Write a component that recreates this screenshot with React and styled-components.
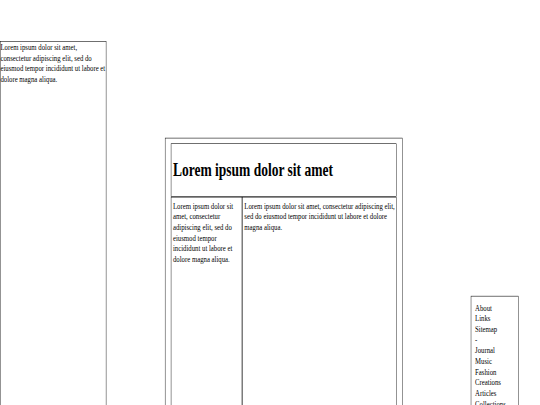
import React from "react";
import styled, { createGlobalStyle } from "styled-components";

const GlobalStyle = createGlobalStyle`
  html, body {
    margin: 0;
    padding: 0;
    overflow: hidden;
    background: #fff;
  }
  body {
    font-family: "Liberation Serif", "Times New Roman", serif;
    font-size: 16px;
    color: #000;
  }
`;

/* The page is laid out at 1280x720 and shown squeezed into the 540x405 window. */
const Stage = styled.div`
  width: 1280px;
  height: 720px;
  overflow: hidden;
  display: flex;
  align-items: flex-start;
  transform: scale(0.421875, 0.5625);
  transform-origin: 0 0;
`;

const Sidebar = styled.aside`
  box-sizing: border-box;
  flex: none;
  width: 252px;
  height: 800px;
  margin-top: 73px;
  border: 1px solid #000;
`;

const Para = styled.p`
  margin: 0;
  line-height: 19px;
`;

const Frame = styled.div`
  box-sizing: border-box;
  flex: none;
  width: 564px;
  margin-top: 245px;
  margin-left: 139px;
  padding: 9px 13px;
  border: 1px solid #000;
`;

const Header = styled.header`
  border: 1px solid #000;
  padding: 7px 4px;
`;

const Title = styled.h1`
  margin: 20px 0 21px;
  font-size: 32px;
  line-height: 38px;
  font-weight: bold;
`;

const Columns = styled.div`
  display: flex;
  align-items: stretch;
`;

const Column = styled.div`
  box-sizing: border-box;
  border: 1px solid #000;
  padding: 5px 4px;
  min-height: 500px;
  ${(p) => (p.$narrow ? "flex: none; width: 169px;" : "flex: 1;")}
`;

const Nav = styled.nav`
  box-sizing: border-box;
  flex: none;
  width: 113px;
  margin-top: 526px;
  margin-left: 161px;
  padding: 10px 9px;
  border: 1px solid #000;
`;

const NavItem = styled.div`
  line-height: 19px;
  white-space: nowrap;
`;

const lorem =
  "Lorem ipsum dolor sit amet, consectetur adipiscing elit, sed do eiusmod tempor incididunt ut labore et dolore magna aliqua.";

const navItems = [
  "About",
  "Links",
  "Sitemap",
  "-",
  "Journal",
  "Music",
  "Fashion",
  "Creations",
  "Articles",
  "Collections",
  "Contact",
];

export default function App() {
  return (
    <>
      <GlobalStyle />
      <Stage>
        <Sidebar>
          <Para>{lorem}</Para>
        </Sidebar>
        <Frame>
          <Header>
            <Title>Lorem ipsum dolor sit amet</Title>
          </Header>
          <Columns>
            <Column $narrow>
              <Para>{lorem}</Para>
            </Column>
            <Column>
              <Para>{lorem}</Para>
            </Column>
          </Columns>
        </Frame>
        <Nav>
          {navItems.map((item, i) => (
            <NavItem key={i}>{item}</NavItem>
          ))}
        </Nav>
      </Stage>
    </>
  );
}
